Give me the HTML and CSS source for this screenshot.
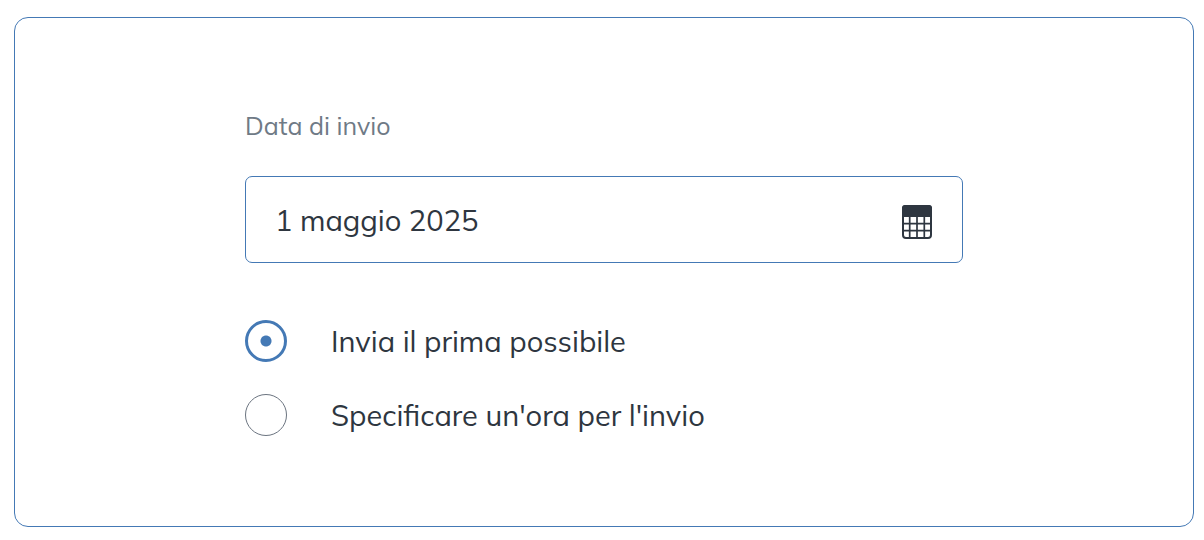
FILE: index.html
```html
<!DOCTYPE html>
<html lang="it">
<head>
<meta charset="utf-8">
<meta name="viewport" content="width=device-width, initial-scale=1">
<title>Data di invio</title>
<link rel="stylesheet" href="styles.css">
</head>
<body>
<form class="card">
  <div class="fields">
    <label class="field-label" for="send-date">Data di invio</label>
    <div class="date-box">
      <input class="date-input" id="send-date" type="text" value="1 maggio 2025">
      <button class="calendar-button" type="button" aria-label="Apri calendario">
        <svg class="calendar-icon" viewBox="0 0 30 34" aria-hidden="true">
          <rect x="1" y="1" width="28" height="32" rx="3" fill="none" stroke="currentColor" stroke-width="2"/>
          <path d="M0 12V3a3 3 0 0 1 3-3h24a3 3 0 0 1 3 3v9z" fill="currentColor"/>
          <path d="M7.700 12v21M15 12v21M22.300 12v21M1 18.700h28M1 25.600h28" fill="none" stroke="currentColor" stroke-width="1.700"/>
        </svg>
      </button>
    </div>
    <div class="options" role="radiogroup" aria-label="Ora di invio">
      <label class="option"><input class="radio" type="radio" name="when" checked><span>Invia il prima possibile</span></label>
      <label class="option"><input class="radio" type="radio" name="when"><span>Specificare un'ora per l'invio</span></label>
    </div>
  </div>
</form>
</body>
</html>
```
FILE: styles.css
```css
* { box-sizing: border-box; }

body {
  margin: 0;
  padding: 17px 10px 13px 14px;
  background: #fff;
  color: #2e3640;
  font-family: Muli, Mulish, Lato, "Open Sans", sans-serif;
  font-size: 29px;
}

.card {
  padding: 92px 20px 90px;
  border: 1px solid #4479b5;
  border-radius: 14px;
}

.fields {
  max-width: 718px;
  margin: 0 auto;
}

.field-label {
  display: block;
  margin-bottom: 34px;
  color: #6f7a86;
  font-size: 25px;
  line-height: 32px;
}

.date-box {
  display: flex;
  align-items: center;
  padding: 0 30px 0 29px;
  border: 1px solid #4479b5;
  border-radius: 7px;
}

.date-input {
  flex: 1;
  min-width: 0;
  height: 85px;
  padding: 0;
  border: 0;
  outline: 0;
  background: none;
  color: inherit;
  font: inherit;
}

.calendar-button {
  display: flex;
  padding: 28px 0 23px;
  border: 0;
  background: none;
  color: inherit;
}

.calendar-icon {
  width: 30px;
  height: 34px;
}

.options {
  display: grid;
  gap: 32px;
  margin-top: 57px;
}

.option {
  display: flex;
  align-items: center;
  gap: 44px;
  line-height: 42px;
}

.radio {
  flex: none;
  width: 42px;
  height: 42px;
  margin: 0;
  border: 1px solid #6b7480;
  border-radius: 50%;
  appearance: none;
}

.radio:checked {
  border: 3px solid #4479b5;
  background: radial-gradient(circle, #4479b5 5px, transparent 6px);
}
```
